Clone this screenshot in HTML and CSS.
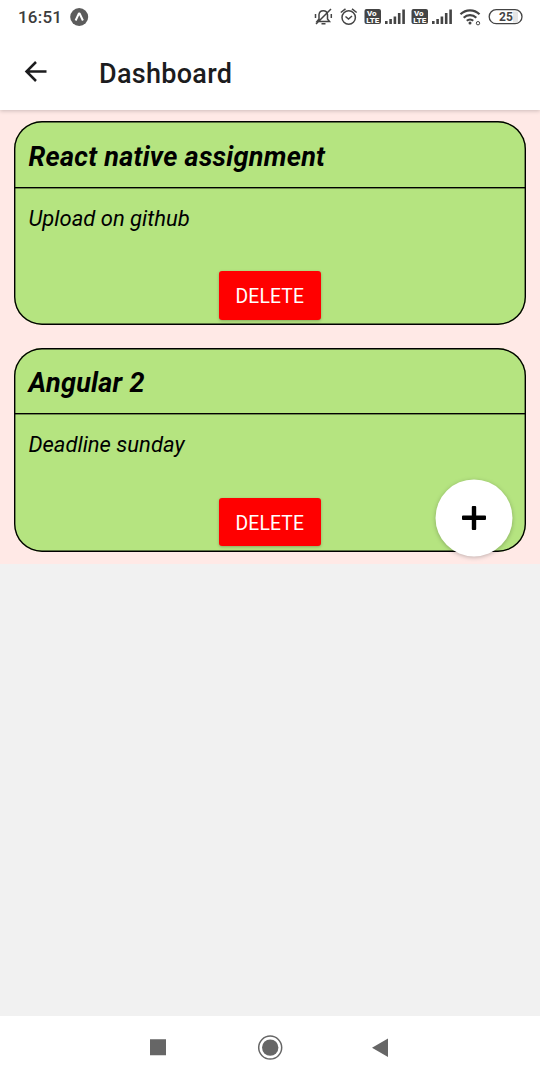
FILE: index.html
```html
<!DOCTYPE html>
<html lang="en">
<head>
<meta charset="utf-8">
<title>Dashboard</title>
<link rel="stylesheet" href="styles.css">
</head>
<body>
<div class="screen">
  <div class="statusbar">
    <span class="clock">16:51</span>
    <svg class="app-dot" width="19" height="19" viewBox="0 0 19 19"><circle cx="9.200" cy="9" r="9" fill="#5c5c5c"/><path d="M5.600 12.500 8.900 5.500h.7l3.300 7" fill="none" stroke="#fff" stroke-width="2" stroke-linejoin="round"/></svg>
    <svg class="tray" width="230" height="34" viewBox="310 0 230 34" fill="none" stroke="#444" stroke-width="1.5">
      <path d="M317 21.500h12.500l-2-2.500v-4.500a4.300 4.300 0 0 0-8.500 0V19zM321.500 23.800h4M316 24 331 9M315.500 14v4M331.300 14v4"/>
      <circle cx="348.700" cy="17.500" r="6.700"/><path d="m345.500 16.500 3 2.500 3.500-3M340.800 12.500l4.700-3.700M356.700 12.500 352 8.800"/>
      <g stroke="none" fill="#444">
        <rect x="364.500" y="9" width="16.500" height="15" rx="2"/>
        <rect x="411.500" y="9" width="16.500" height="15" rx="2"/>
        <path id="bars" d="M385 21h2.600v3H385zM389.300 19h2.600v5h-2.600zM393.600 16.500h2.600V24h-2.600zM397.900 13h2.600v11h-2.600zM402.300 9.500h2.600V24h-2.600z"/>
        <use href="#bars" x="47"/>
      </g>
      <g class="volte" stroke="none" fill="#fff"><text x="367" y="16">Vo</text><text x="366.300" y="23">LTE</text><text x="414" y="16">Vo</text><text x="413.300" y="23">LTE</text></g>
      <path stroke-width="2.200" d="M460.500 14.200a13.500 13.500 0 0 1 19 0M463.700 17.700a9 9 0 0 1 12.600 0M466.800 20.800a4.600 4.600 0 0 1 6.400 0"/>
      <circle cx="470" cy="23" r="1.500" fill="#444" stroke="none"/><circle cx="478" cy="23.200" r="1.700" stroke-width="1"/>
      <rect x="513" y="11.500" width="5" height="11" fill="#e5e5e5" stroke="none"/>
      <rect x="489.200" y="9.700" width="32.800" height="14" rx="7" stroke-width="1.300"/>
      <text class="battery" x="499" y="21" stroke="none" fill="#444">25</text>
    </svg>
  </div>
  <header class="header">
    <svg class="back" width="24" height="24" viewBox="0 0 24 24" fill="none" stroke="#1c1c1e" stroke-width="2.500"><path d="M22.500 11.500H3M12 2 2.500 11.500 12 21"/></svg>
    <h1 class="title">Dashboard</h1>
  </header>
  <main class="list">
    <article class="card">
      <h2 class="card-title">React native assignment</h2>
      <p class="card-text">Upload on github</p>
      <button class="delete">DELETE</button>
    </article>
    <article class="card">
      <h2 class="card-title">Angular 2</h2>
      <p class="card-text">Deadline sunday</p>
      <button class="delete">DELETE</button>
    </article>
  </main>
  <button class="fab" aria-label="Add"><svg width="78" height="78" viewBox="0 0 78 78"><circle cx="39" cy="38.900" r="38.500" fill="#fff"/><path transform="translate(26 26)" d="M11.800 1h2.400q1 0 1 1v8.600h8.800q1 0 1 1V14q0 1-1 1h-8.800v9q0 1-1 1h-2.400q-1 0-1-1v-9H2q-1 0-1-1v-2.400q0-1 1-1h8.800V2q0-1 1-1z"/></svg></button>
  <nav class="navbar">
    <svg width="540" height="64" viewBox="0 1016 540 64" fill="#666"><path d="M150 1039.300h16v16h-16zM388 1038.500v18.500l-16-9.200z"/><circle cx="270.200" cy="1047.600" r="8.200"/><circle cx="270.200" cy="1047.600" r="11.500" fill="none" stroke="#666" stroke-width="1.500"/></svg>
  </nav>
</div>
</body>
</html>
```
FILE: styles.css
```css
* { box-sizing: border-box; }
body { margin: 0; font-family: Roboto, sans-serif; }
h1, h2, p { margin: 0; }
button { border: 0; padding: 0; font-family: inherit; }
svg { display: block; flex: none; }
.screen {
  position: relative;
  width: 540px;
  height: 1080px;
  display: flex;
  flex-direction: column;
  background: #f1f1f1;
  overflow: hidden;
}
.statusbar {
  height: 34px;
  flex: none;
  display: flex;
  align-items: center;
  background: #fff;
  padding-left: 18px;
  z-index: 2;
}
.clock { font-size: 17px; font-weight: 500; letter-spacing: .2px; color: #3c3c3c; width: 51.500px; }
.tray { margin-left: auto; }
.volte { font-size: 8px; font-weight: 800; }
.battery { font-size: 12px; font-weight: 700; }
.header {
  height: 76px;
  flex: none;
  display: flex;
  align-items: center;
  background: #fff;
  padding-left: 24px;
  box-shadow: 0 1px 4px rgba(0, 0, 0, .2);
  z-index: 1;
}
.title { margin-left: 51px; padding-top: 3px; font-size: 27px; font-weight: 500; letter-spacing: .3px; color: #1c1c1e; }
.list {
  flex: none;
  height: 453.500px;
  padding: 11px 14px 0 13.500px;
  background: #ffe9e6;
  display: flex;
  flex-direction: column;
  gap: 22.500px;
}
.card {
  height: 204px;
  flex: none;
  border-radius: 28px;
  background: #b5e480;
  box-shadow: inset 0 0 0 1.400px #000;
  display: flex;
  flex-direction: column;
  align-items: center;
}
.card-title {
  align-self: stretch;
  height: 67.500px;
  padding: 2.600px 0 0 15px;
  line-height: 66px;
  background: linear-gradient(#000 50%, rgba(0, 0, 0, .4) 50%) 0 100% / 100% 2px no-repeat;
  font-size: 27px;
  font-weight: 700;
  font-style: italic;
  letter-spacing: .28px;
}
.card-text {
  align-self: stretch;
  height: 82.500px;
  padding: 14px 0 0 15px;
  font-size: 22px;
  line-height: 32px;
  font-style: italic;
}
.delete {
  width: 102px;
  height: 48.500px;
  padding-top: 3px;
  border-radius: 3px;
  background: #f00;
  color: #fff;
  font-size: 19.300px;
  letter-spacing: .15px;
  box-shadow: 0 1px 3px rgba(0, 0, 0, .25);
}
.fab {
  position: absolute;
  left: 435px;
  top: 479px;
  width: 78px;
  height: 78px;
  border-radius: 50%;
  background: none;
}
.fab svg { overflow: visible; filter: drop-shadow(0 1px 2px rgba(0, 0, 0, .25)); }
.navbar { height: 64px; margin-top: auto; background: #fff; }
```
